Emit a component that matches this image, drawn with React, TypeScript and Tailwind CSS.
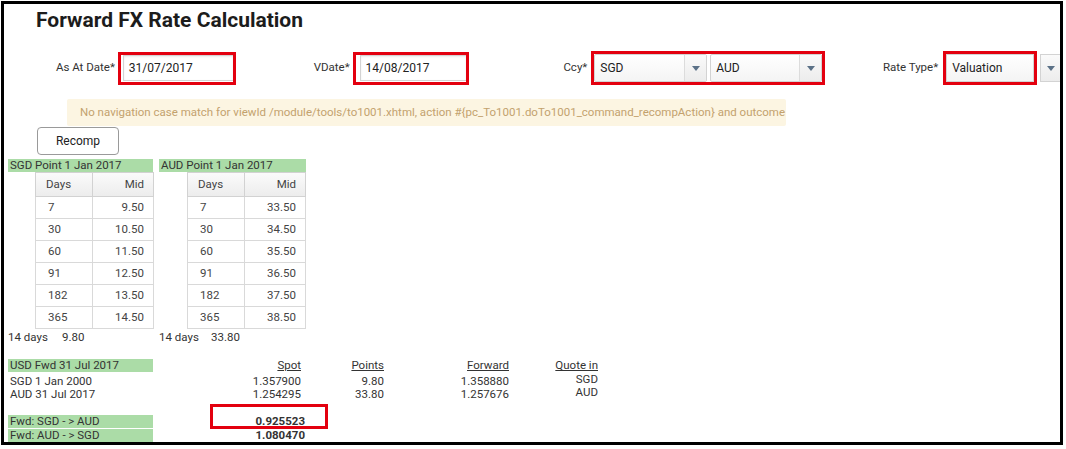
const sgdPoints = [
  ["7", "9.50"],
  ["30", "10.50"],
  ["60", "11.50"],
  ["91", "12.50"],
  ["182", "13.50"],
  ["365", "14.50"],
];

const audPoints = [
  ["7", "33.50"],
  ["30", "34.50"],
  ["60", "35.50"],
  ["91", "36.50"],
  ["182", "37.50"],
  ["365", "38.50"],
];

function Caret() {
  return (
    <svg width="8" height="5" viewBox="0 0 8 5">
      <path d="M0 0h8L4 5z" fill="#5b7187" />
    </svg>
  );
}

function SelectBox({ value, className }: { value: string; className: string }) {
  return (
    <div
      className={
        "flex h-[28px] border border-[#d3d3d3] bg-gradient-to-b from-white to-[#f4f4f4] rounded-[2px] " +
        className
      }
    >
      <div className="flex-1 flex items-center pl-[5px] text-[12px] text-[#222]">
        {value}
      </div>
      <div className="w-[22px] flex items-center justify-center border-l border-[#dcdcdc] bg-gradient-to-b from-[#fafafa] to-[#ececec]">
        <Caret />
      </div>
    </div>
  );
}

function PointTable({ rows }: { rows: string[][] }) {
  return (
    <table className="border-collapse w-[119px] text-[11.5px] text-[#444]">
      <thead>
        <tr className="h-[24px] bg-gradient-to-b from-[#fbfbfb] to-[#ececec]">
          <th className="border border-[#d2d2d2] w-[57px] font-normal text-left pl-[10px]">
            Days
          </th>
          <th className="border border-[#d2d2d2] font-normal text-right pr-[9px]">
            Mid
          </th>
        </tr>
      </thead>
      <tbody>
        {rows.map(([days, mid]) => (
          <tr key={days} className="h-[22px]">
            <td className="border border-[#d9d9d9] pl-[12px]">{days}</td>
            <td className="border border-[#d9d9d9] text-right pr-[9px]">{mid}</td>
          </tr>
        ))}
      </tbody>
    </table>
  );
}

export default function App() {
  return (
    <div className="bg-white w-[1066px] h-[449px] pt-[1px] pl-[1px] font-['Roboto','Liberation_Sans',sans-serif]">
      <div className="w-[1062px] h-[444px] border-[3px] border-black overflow-hidden">
        <div className="pl-[32px] pt-[4px] text-[21px] leading-[24px] font-bold text-[#1c1c1c]">
          Forward FX Rate Calculation
        </div>

        {/* parameters row */}
        <div className="flex items-center h-[36px] mt-[18px] text-[11.5px] text-[#333]">
          <div className="w-[111px] text-right">As At Date*</div>
          <div className="ml-[3px] w-[118px] h-[33px] border-[3px] border-[#e3000f] flex items-center">
            <div className="ml-[2px] flex-1 h-[26px] border border-r-0 border-[#d3d3d3] shadow-[inset_0_1px_2px_rgba(0,0,0,0.08)] flex items-center pl-[5px] text-[12px] text-[#222]">
              31/07/2017
            </div>
          </div>

          <div className="w-[114px] text-right">VDate*</div>
          <div className="ml-[3px] w-[117px] h-[33px] border-[3px] border-[#e3000f] flex items-center">
            <div className="ml-[4px] flex-1 h-[26px] border border-r-0 border-[#d3d3d3] shadow-[inset_0_1px_2px_rgba(0,0,0,0.08)] flex items-center pl-[5px] text-[12px] text-[#222]">
              14/08/2017
            </div>
          </div>

          <div className="w-[118px] text-right">Ccy*</div>
          <div className="ml-[4px] w-[234px] h-[34px] border-[3px] border-[#e3000f] flex items-center gap-[3px]">
            <SelectBox value="SGD" className="w-[113px]" />
            <SelectBox value="AUD" className="w-[112px]" />
          </div>

          <div className="w-[113px] text-right">Rate Type*</div>
          <div className="ml-[5px] w-[94px] h-[34px] border-[3px] border-[#e3000f] flex items-center">
            <div className="w-full h-[28px] border border-[#d3d3d3] bg-gradient-to-b from-white to-[#f4f4f4] flex items-center pl-[5px] text-[12px] text-[#222]">
              Valuation
            </div>
          </div>
          <div className="ml-[3px] w-[20px] h-[28px] border border-r-0 border-[#d3d3d3] bg-gradient-to-b from-[#fafafa] to-[#ececec] flex items-center justify-center">
            <Caret />
          </div>
        </div>

        {/* message */}
        <div className="ml-[63px] mt-[13px] w-[719px] h-[27px] bg-[#fcf5e2] rounded-[2px] flex items-center pl-[13px] text-[11.5px] text-[#c3a26e] whitespace-nowrap">
          No navigation case match for viewId /module/tools/to1001.xhtml, action
          #{"{"}pc_To1001.doTo1001_command_recompAction{"}"} and outcome
        </div>

        <button className="ml-[33px] mt-[1px] w-[82px] h-[28px] rounded-[4px] border border-[#9a9a9a] bg-white text-[12px] text-[#222]">
          Recomp
        </button>

        {/* points tables */}
        <div className="flex ml-[4px] mt-[4px] gap-[6px] text-[11.5px] text-[#333]">
          <div className="w-[145px]">
            <div className="h-[13px] leading-[13px] bg-[#abdca7] pl-[2px]">SGD Point 1 Jan 2017</div>
            <div className="ml-[27px]">
              <PointTable rows={sgdPoints} />
            </div>
            <div className="flex leading-[14px] mt-[1px]">
              <span className="w-[54px]">14 days</span>
              <span>9.80</span>
            </div>
          </div>
          <div className="w-[147px]">
            <div className="h-[13px] leading-[13px] bg-[#abdca7] pl-[2px]">AUD Point 1 Jan 2017</div>
            <div className="ml-[28px]">
              <PointTable rows={audPoints} />
            </div>
            <div className="flex leading-[14px] mt-[1px]">
              <span className="w-[52px]">14 days</span>
              <span>33.80</span>
            </div>
          </div>
        </div>

        {/* forward summary */}
        <div className="relative ml-[4px] mt-[15px] text-[11.5px] text-[#333] leading-[13px]">
          <div className="flex h-[13px]">
            <div className="w-[145px] bg-[#abdca7] pl-[2px]">USD Fwd 31 Jul 2017</div>
            <div className="w-[148px] text-right underline">Spot</div>
            <div className="w-[83px] text-right underline">Points</div>
            <div className="w-[125px] text-right underline">Forward</div>
            <div className="w-[89px] text-right underline">Quote in</div>
          </div>
          <div className="flex mt-[3px]">
            <div className="w-[145px] pl-[2px]">SGD 1 Jan 2000</div>
            <div className="w-[148px] text-right">1.357900</div>
            <div className="w-[83px] text-right">9.80</div>
            <div className="w-[125px] text-right">1.358880</div>
            <div className="w-[89px] text-right -mt-[2px]">SGD</div>
          </div>
          <div className="flex">
            <div className="w-[145px] pl-[2px]">AUD 31 Jul 2017</div>
            <div className="w-[148px] text-right">1.254295</div>
            <div className="w-[83px] text-right">33.80</div>
            <div className="w-[125px] text-right">1.257676</div>
            <div className="w-[89px] text-right -mt-[2px]">AUD</div>
          </div>
          <div className="flex mt-[14px]">
            <div className="w-[145px] bg-[#abdca7] pl-[2px]">Fwd: SGD - &gt; AUD</div>
            <div className="w-[152px] text-right font-bold">0.925523</div>
          </div>
          <div className="flex mt-[1px]">
            <div className="w-[145px] bg-[#abdca7] pl-[2px]">Fwd: AUD - &gt; SGD</div>
            <div className="w-[152px] text-right font-bold">1.080470</div>
          </div>
          <div className="absolute left-[202px] top-[45px] w-[118px] h-[25px] border-[3px] border-[#e3000f]" />
        </div>
      </div>
    </div>
  );
}
